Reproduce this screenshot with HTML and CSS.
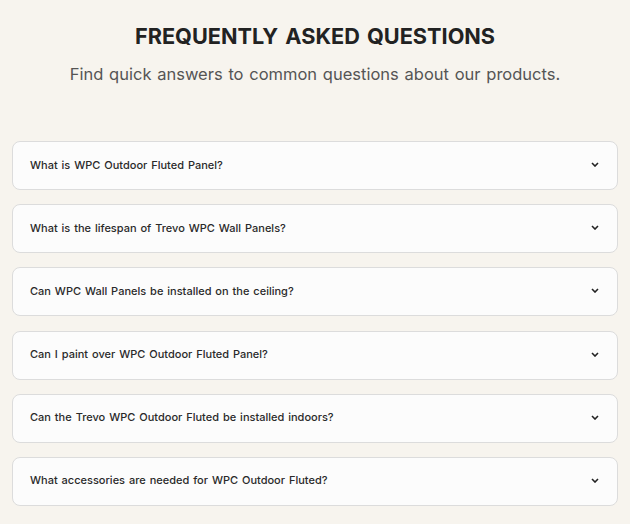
FILE: index.html
```html
<!DOCTYPE html>
<html lang="en">
<head>
<meta charset="utf-8">
<link rel="stylesheet" href="styles.css">
</head>
<body>
<section class="faq">
  <header class="faq-head">
    <h1 class="faq-title">FREQUENTLY ASKED QUESTIONS</h1>
    <p class="faq-sub">Find quick answers to common questions about our products.</p>
  </header>
  <div class="faq-list">
    <div class="faq-item"><span class="q">What is WPC Outdoor Fluted Panel?</span><svg class="chev" viewBox="0 0 8 5" width="8" height="5"><path d="M1 1 L4 4 L7 1" fill="none" stroke="#222" stroke-width="1.6"/></svg></div>
    <div class="faq-item"><span class="q">What is the lifespan of Trevo WPC Wall Panels?</span><svg class="chev" viewBox="0 0 8 5" width="8" height="5"><path d="M1 1 L4 4 L7 1" fill="none" stroke="#222" stroke-width="1.6"/></svg></div>
    <div class="faq-item"><span class="q">Can WPC Wall Panels be installed on the ceiling?</span><svg class="chev" viewBox="0 0 8 5" width="8" height="5"><path d="M1 1 L4 4 L7 1" fill="none" stroke="#222" stroke-width="1.6"/></svg></div>
    <div class="faq-item"><span class="q">Can I paint over WPC Outdoor Fluted Panel?</span><svg class="chev" viewBox="0 0 8 5" width="8" height="5"><path d="M1 1 L4 4 L7 1" fill="none" stroke="#222" stroke-width="1.6"/></svg></div>
    <div class="faq-item"><span class="q">Can the Trevo WPC Outdoor Fluted be installed indoors?</span><svg class="chev" viewBox="0 0 8 5" width="8" height="5"><path d="M1 1 L4 4 L7 1" fill="none" stroke="#222" stroke-width="1.6"/></svg></div>
    <div class="faq-item"><span class="q">What accessories are needed for WPC Outdoor Fluted?</span><svg class="chev" viewBox="0 0 8 5" width="8" height="5"><path d="M1 1 L4 4 L7 1" fill="none" stroke="#222" stroke-width="1.6"/></svg></div>
  </div>
</section>
</body>
</html>
```
FILE: styles.css
```css
html, body {
  margin: 0;
  padding: 0;
  background: #f7f4ee;
}
body {
  font-family: Inter, "Liberation Sans", sans-serif;
  color: #222;
}
.faq {
  padding: 22px 12px 0 12px;
}
.faq-head {
  text-align: center;
}
.faq-title {
  margin: 0;
  font-size: 21.7px;
  font-weight: 700;
  line-height: 28px;
  letter-spacing: 0;
  word-spacing: 2px;
  color: #222;
}
.faq-sub {
  margin: 12px 0 0 0;
  font-size: 16.5px;
  line-height: 24px;
  color: #555;
  letter-spacing: 0;
  word-spacing: 1.1px;
}
.faq-list {
  margin-top: 55px;
  display: flex;
  flex-direction: column;
  gap: 14.2px;
}
.faq-item {
  height: 49px;
  box-sizing: border-box;
  border: 1px solid #dcdcdc;
  border-radius: 8px;
  background: #fcfcfc;
  display: flex;
  align-items: center;
  justify-content: space-between;
  padding: 0 18px 2px 17px;
}
.q {
  font-size: 11px;
  font-weight: 500;
  color: #2a2a2a;
  letter-spacing: 0;
  word-spacing: 1px;
}
.chev {
  display: block;
}
```
